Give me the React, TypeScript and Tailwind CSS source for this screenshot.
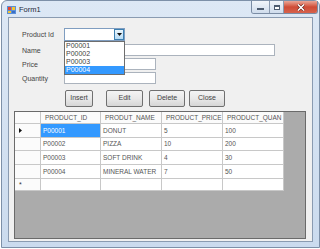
const rows = [
  ["P00001", "DONUT", "5", "100"],
  ["P00002", "PIZZA", "10", "200"],
  ["P00003", "SOFT DRINK", "4", "30"],
  ["P00004", "MINERAL WATER", "7", "50"],
  ["", "", "", ""],
];

const rowHeights = ["h-[14px]", "h-[13px]", "h-[14px]", "h-[14px]", "h-[12px]"];
const colWidths = ["w-[60px]", "w-[61px]", "w-[61px]", "w-[61px]"];
const headers = ["PRODUCT_ID", "PRODUT_NAME", "PRODUCT_PRICE", "PRODUCT_QUAN"];

function FormIcon() {
  return (
    <svg width="9" height="8" viewBox="0 0 9 8">
      <rect x="0" y="0" width="9" height="8" fill="#5b8fd6" />
      <rect x="1" y="1" width="3" height="3" fill="#e8452f" />
      <rect x="5" y="1" width="3" height="3" fill="#f5c431" />
      <rect x="1" y="5" width="3" height="2" fill="#f5c431" />
      <rect x="5" y="5" width="3" height="2" fill="#3a6fc9" />
    </svg>
  );
}

function TitleBar() {
  return (
    <div className="relative h-[16px] shrink-0">
      <div className="absolute left-[5px] top-[5px]">
        <FormIcon />
      </div>
      <span className="absolute left-[17px] top-[5px] text-[7.5px] leading-[8px] text-[#1c2838]">
        Form1
      </span>
      <div className="absolute right-[1px] top-0 flex h-[13px] overflow-hidden rounded-b-[3px] border border-t-0 border-[#7a8ca4]">
        <div className="flex w-[18px] items-end justify-center border-r border-[#8b9bb0] bg-gradient-to-b from-[#f1f5fa] to-[#cfdcec] pb-[3px]">
          <div className="h-[2px] w-[7px] border border-[#4d5c70] bg-white" />
        </div>
        <div className="flex w-[14px] items-center justify-center border-r border-[#8b9bb0] bg-gradient-to-b from-[#f1f5fa] to-[#cfdcec]">
          <div className="h-[5px] w-[6px] border border-[#4d5c70] border-t-2 bg-white" />
        </div>
        <div className="flex w-[33px] items-center justify-center bg-gradient-to-b from-[#e9a697] via-[#cf4b36] to-[#d6624c]">
          <svg width="8" height="7" viewBox="0 0 8 7">
            <path d="M1 0.5 L7 6.5 M7 0.5 L1 6.5" stroke="#5a1a12" strokeWidth="2.6" />
            <path d="M1 0.5 L7 6.5 M7 0.5 L1 6.5" stroke="#ffffff" strokeWidth="1.6" />
          </svg>
        </div>
      </div>
    </div>
  );
}

function TextBox({ width }: { width: string }) {
  return <div className={`h-[12px] ${width} border border-[#abb3bd] bg-white`} />;
}

function Field({ label, children, className }: { label: string; children: React.ReactNode; className: string }) {
  return (
    <div className={`flex items-center ${className}`}>
      <span className="w-[42px] text-[7px] leading-[9px] text-[#444]">{label}</span>
      {children}
    </div>
  );
}

function Combo() {
  const items = ["P00001", "P00002", "P00003", "P00004"];
  return (
    <div className="relative z-10 h-[13px] w-[61px]">
      <div className="flex h-full w-full border border-[#7f9dc0] bg-white">
        <div className="flex-1" />
        <div className="flex w-[10px] items-center justify-center border border-[#3c7fb1] bg-gradient-to-b from-[#eaf6fd] to-[#b6dbf5]">
          <svg width="5" height="3" viewBox="0 0 5 3">
            <path d="M0 0 H5 L2.5 3 Z" fill="#111" />
          </svg>
        </div>
      </div>
      <div className="absolute left-0 top-full w-[61px] border border-[#6e6e6e] bg-white">
        {items.map((item, i) => (
          <div
            key={item}
            className={`h-[8px] pl-[1px] text-[7px] leading-[8px] ${
              i === 3 ? "bg-[#3399ff] text-white" : "text-[#444]"
            }`}
          >
            {item}
          </div>
        ))}
      </div>
    </div>
  );
}

function Button({ label, className }: { label: string; className: string }) {
  return (
    <div
      className={`flex h-[17px] items-center justify-center rounded-[2px] border border-[#707070] bg-gradient-to-b from-[#f4f4f4] via-[#e9e9e9] to-[#d6d6d6] text-[7px] text-[#444] ${className}`}
    >
      {label}
    </div>
  );
}

function Grid() {
  return (
    <div className="ml-[5px] mt-[4px] h-[128px] w-[292px] border border-[#6a6a6a] bg-[#ababab]">
      <div className="flex h-[12px] w-[269px] border-b border-[#c8c8c8] bg-[#fbfbfb]">
        <div className="w-[26px] border-r border-[#c8c8c8]" />
        {headers.map((h, i) => (
          <div
            key={h}
            className={`${colWidths[i]} overflow-hidden whitespace-nowrap border-r border-[#c8c8c8] pl-[4px] text-[6.5px] leading-[11px] text-[#555]`}
          >
            {h}
          </div>
        ))}
      </div>
      {rows.map((row, r) => (
        <div key={r} className={`flex ${rowHeights[r]} w-[269px] border-b border-[#c8c8c8] bg-white`}>
          <div className="flex w-[26px] items-center border-r border-[#c8c8c8] bg-[#fbfbfb] pl-[4px]">
            {r === 0 ? (
              <svg width="3" height="5" viewBox="0 0 3 5">
                <path d="M0 0 L3 2.5 L0 5 Z" fill="#111" />
              </svg>
            ) : null}
            {r === 4 ? <span className="text-[7px] leading-[7px] text-[#333]">*</span> : null}
          </div>
          {row.map((cell, c) => (
            <div
              key={c}
              className={`flex ${colWidths[c]} items-center overflow-hidden whitespace-nowrap border-r border-[#c8c8c8] pl-[2px] text-[6.5px] ${
                r === 0 && c === 0 ? "bg-[#3399ff] text-white" : "text-[#555]"
              }`}
            >
              {cell}
            </div>
          ))}
        </div>
      ))}
    </div>
  );
}

export default function App() {
  return (
    <div className="h-[249px] w-[320px] overflow-hidden bg-white pl-[1px] font-['Liberation_Sans',sans-serif]">
      <div className="flex h-[248px] w-[319px] flex-col rounded-t-[6px] border border-[#7d90a8] bg-gradient-to-b from-[#dde8f5] to-[#cbdbee]">
        <TitleBar />
        <div className="flex flex-1 flex-col px-[6px] pb-[5px]">
          <div className="flex flex-1 flex-col border border-[#8a9bb1] bg-[#f0f0f0]">
            <div className="flex flex-col pl-[13px] pt-[10px]">
              <Field label="Product Id" className="h-[13px]">
                <Combo />
              </Field>
              <Field label="Name" className="mt-[3px] h-[12px]">
                <TextBox width="w-[211px]" />
              </Field>
              <Field label="Price" className="mt-[2px] h-[12px]">
                <TextBox width="w-[92px]" />
              </Field>
              <Field label="Quantity" className="mt-[2px] h-[12px]">
                <TextBox width="w-[92px]" />
              </Field>
              <div className="mt-[6px] flex">
                <Button label="Insert" className="ml-[43px] w-[28px]" />
                <Button label="Edit" className="ml-[13px] w-[37px]" />
                <Button label="Delete" className="ml-[6px] w-[36px]" />
                <Button label="Close" className="ml-[4px] w-[36px]" />
              </div>
            </div>
            <Grid />
          </div>
        </div>
      </div>
    </div>
  );
}
